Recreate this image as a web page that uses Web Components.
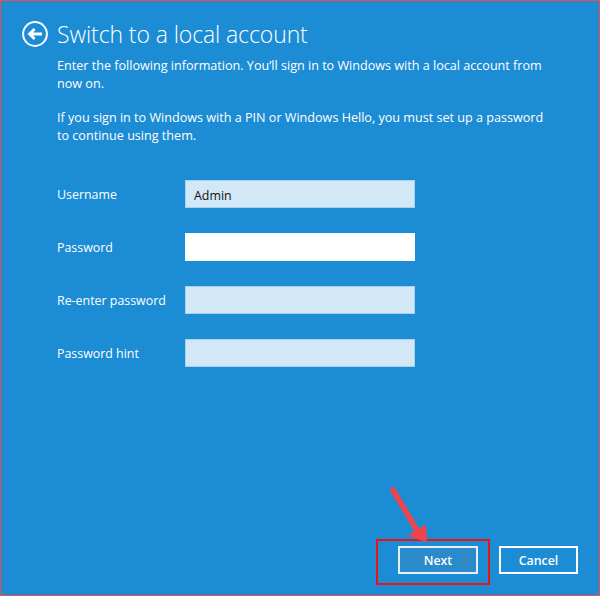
<!DOCTYPE html>
<html><head><meta charset="utf-8"><style>
html,body{margin:0;padding:0;background:#1c8cd5}
</style></head><body>
<local-account-page>
  <form-row label="Username" value="Admin"></form-row>
  <form-row label="Password" focused></form-row>
  <form-row label="Re-enter password"></form-row>
  <form-row label="Password hint"></form-row>
</local-account-page>
<script>
class BackIcon extends HTMLElement{constructor(){super();this.attachShadow({mode:'open'}).innerHTML=`<style>:host{display:block;width:26px;height:26px;flex:none}svg{display:block}</style>
<svg width="26" height="26" viewBox="0 0 26 26"><circle cx="13" cy="13" r="11.9" fill="none" stroke="#fff" stroke-width="2"/><path d="M7.5 13H20M12.6 8 7.5 13 12.6 18" fill="none" stroke="#fff" stroke-width="2.8"/></svg>`}}
customElements.define('back-icon',BackIcon);
class FormRow extends HTMLElement{constructor(){super();const l=this.getAttribute('label')||'',v=this.getAttribute('value')||'';this.attachShadow({mode:'open'}).innerHTML=`<style>
:host{display:flex;align-items:center;height:28px;font:12.4px/18px "Open Sans","Noto Sans",sans-serif;color:#fff}
.l{width:128px;flex:none;white-space:nowrap;padding-top:2px}
.f{width:230px;height:28px;box-sizing:border-box;background:${this.hasAttribute('focused')?'#fff':'#d2e8f7'};border:1px solid ${this.hasAttribute('focused')?'#fff':'#a5d1ee'};padding:4px 8px 0;display:flex;align-items:center;color:#111}
</style><div class="l">${l}</div><div class="f">${v}</div>`}}
customElements.define('form-row',FormRow);
class WinButton extends HTMLElement{constructor(){super();this.attachShadow({mode:'open'}).innerHTML=`<style>
:host{display:flex;align-items:center;justify-content:center;box-sizing:border-box;height:28px;width:80px;border:2px solid #fff;color:#fff;font:600 12.4px "Open Sans","Noto Sans",sans-serif}
:host([primary]){background:#2a8aca;border-color:#e4f1fa}
:host(:not([primary])){width:79px}
</style><slot></slot>`}}
customElements.define('win-button',WinButton);
class LocalAccountPage extends HTMLElement{constructor(){super();this.attachShadow({mode:'open'}).innerHTML=`<style>
:host{display:flex;flex-direction:column;position:relative;box-sizing:border-box;width:600px;height:596px;background:#1c8cd5;border:1px solid #f04a4a;padding:20px 21px 21px 21px;color:#fff;font-family:"Open Sans","Noto Sans",sans-serif}
header{display:flex;align-items:center;gap:9px;height:26px}
h1{margin:0;font-weight:300;font-size:23px;line-height:26px;white-space:nowrap;letter-spacing:-.1px}
.body{padding-left:35px;margin-top:10px;font-size:12.6px;line-height:18px}
p{margin:0 0 16px;white-space:nowrap}
.rows{display:flex;flex-direction:column;gap:25px;margin-top:19px;padding-left:35px}
footer{margin-top:auto;display:flex;justify-content:flex-end;gap:21px}
.hl{position:absolute;left:375px;top:538px;width:114px;height:46px;box-sizing:border-box;border:2px solid #f01018}
.ar{position:absolute;left:380px;top:480px}
</style>
<header><back-icon></back-icon><h1>Switch to a local account</h1></header>
<div class="body"><p>Enter the following information. You’ll sign in to Windows with a local account from<br>now on.</p><p>If you sign in to Windows with a PIN or Windows Hello, you must set up a password<br>to continue using them.</p></div>
<div class="rows"><slot></slot></div>
<footer><win-button primary>Next</win-button><win-button>Cancel</win-button></footer>
<div class="hl"></div>
<svg class="ar" width="60" height="70" viewBox="0 0 60 70"><path d="M12 9 37 51" stroke="#f0444c" stroke-width="5.5" stroke-linecap="round" fill="none"/><path d="M29 54 44 45 45 60Z" fill="#f0444c" stroke="#f0444c" stroke-width="2" stroke-linejoin="round"/></svg>`}}
customElements.define('local-account-page',LocalAccountPage);
</script></body></html>
